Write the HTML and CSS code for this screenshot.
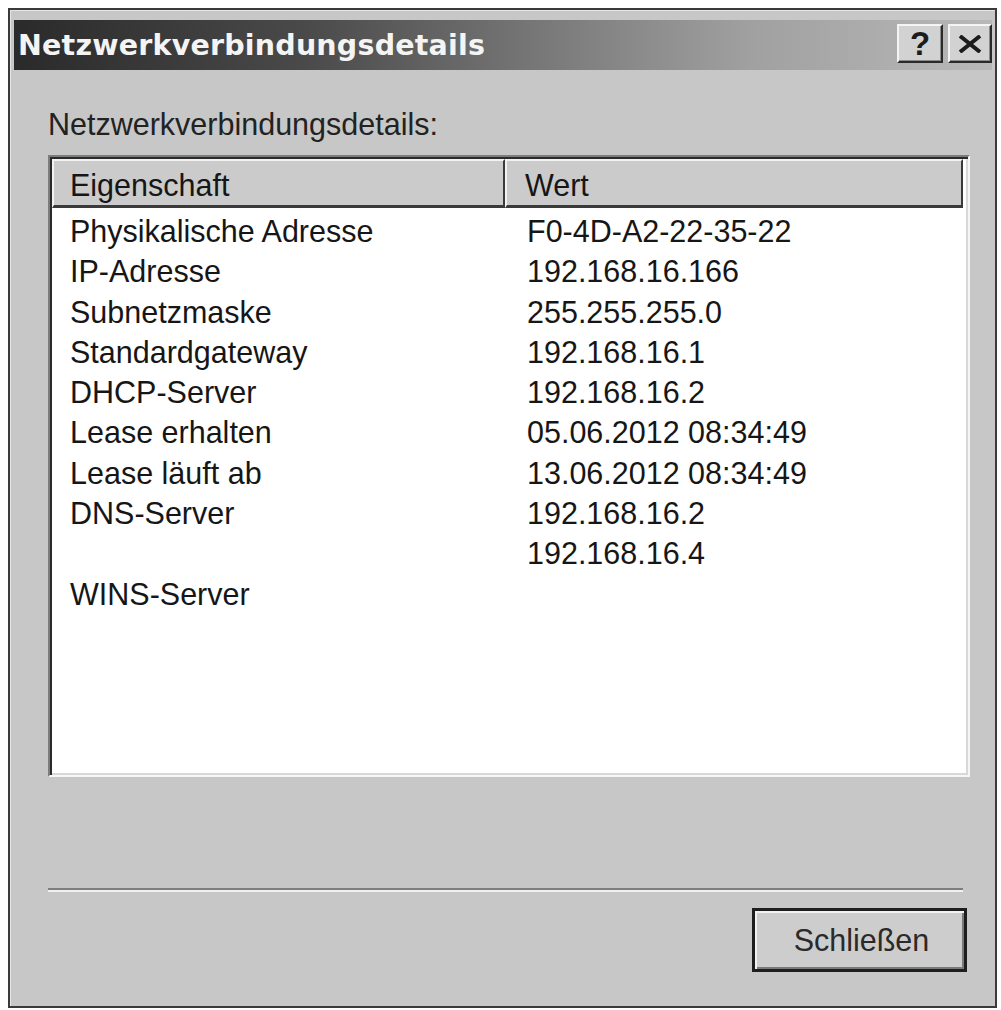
FILE: index.html
```html
<!DOCTYPE html>
<html lang="de">
<head>
<meta charset="utf-8">
<title>Netzwerkverbindungsdetails</title>
<link rel="stylesheet" href="styles.css">
</head>
<body>
<div class="window">
  <div class="titlebar">
    <span class="title">Netzwerkverbindungsdetails</span>
    <div class="tbtns">
      <div class="tbtn help">?</div>
      <div class="tbtn close">
        <svg width="24" height="18" viewBox="0 0 24 18"><path d="M2 1 L22 17 M22 1 L2 17" stroke="#1c1c1c" stroke-width="4" fill="none"/></svg>
      </div>
    </div>
  </div>
  <div class="content">
    <div class="label">Netzwerkverbindungsdetails:</div>
    <div class="listbox">
      <div class="header">
        <div class="hcell c1">Eigenschaft</div>
        <div class="hcell c2">Wert</div>
      </div>
      <div class="rows">
        <div class="row"><span class="col1">Physikalische Adresse</span><span class="col2">F0-4D-A2-22-35-22</span></div>
        <div class="row"><span class="col1">IP-Adresse</span><span class="col2">192.168.16.166</span></div>
        <div class="row"><span class="col1">Subnetzmaske</span><span class="col2">255.255.255.0</span></div>
        <div class="row"><span class="col1">Standardgateway</span><span class="col2">192.168.16.1</span></div>
        <div class="row"><span class="col1">DHCP-Server</span><span class="col2">192.168.16.2</span></div>
        <div class="row"><span class="col1">Lease erhalten</span><span class="col2">05.06.2012 08:34:49</span></div>
        <div class="row"><span class="col1">Lease läuft ab</span><span class="col2">13.06.2012 08:34:49</span></div>
        <div class="row"><span class="col1">DNS-Server</span><span class="col2">192.168.16.2</span></div>
        <div class="row"><span class="col1"></span><span class="col2">192.168.16.4</span></div>
        <div class="row"><span class="col1">WINS-Server</span><span class="col2"></span></div>
      </div>
    </div>
    <div class="sep"></div>
    <div class="btnrow"><button class="btn">Schließen</button></div>
  </div>
</div>
</body>
</html>
```
FILE: styles.css
```css
html, body {
  margin: 0;
  padding: 0;
  background: #ffffff;
}
body {
  font-family: "Liberation Sans", Arial, sans-serif;
}
.window {
  box-sizing: border-box;
  width: 989px;
  height: 1000px;
  margin: 8px 0 0 8px;
  border: 2px solid #3a3a3a;
  box-shadow: inset 1px 1px 0 #e6e6e6;
  background: #c7c7c7;
  padding: 10px 3px 0 4px;
  display: flex;
  flex-direction: column;
}
.titlebar {
  height: 50px;
  display: flex;
  align-items: center;
  background: linear-gradient(to right, #2a2a2a 0%, #4a4a4a 30%, #7a7a7a 55%, #a0a0a0 75%, #b8b8b8 100%);
  padding-left: 4px;
}
.title {
  font-family: "DejaVu Sans", Verdana, sans-serif;
  font-weight: bold;
  font-size: 28.5px;
  color: #f4f4f4;
  letter-spacing: 0.2px;
  flex: 1;
  white-space: nowrap;
}
.tbtns {
  display: flex;
  gap: 5px;
  align-self: flex-start;
  margin-top: 4px;
}
.tbtn {
  box-sizing: border-box;
  height: 39px;
  background: #d2d2d2;
  border-top: 2px solid #f4f4f4;
  border-left: 2px solid #f4f4f4;
  border-right: 2px solid #2a2a2a;
  border-bottom: 2px solid #2a2a2a;
  box-shadow: inset -1px -1px 0 #8a8a8a;
  display: flex;
  align-items: center;
  justify-content: center;
}
.help {
  width: 46px;
  font-weight: bold;
  font-size: 33px;
  color: #1c1c1c;
  line-height: 1;
}
.close {
  width: 44px;
}
.content {
  flex: 1;
  padding: 0 22px 0 34px;
  display: flex;
  flex-direction: column;
  color: #161616;
  font-size: 30.5px;
}
.label {
  margin-top: 37px;
  line-height: 34px;
  color: #222222;
  height: 36px;
}
.listbox {
  box-sizing: border-box;
  margin-top: 12px;
  height: 622px;
  background: #ffffff;
  border: 2px solid;
  border-color: #7c7c7c #f6f6f6 #f6f6f6 #7c7c7c;
  box-shadow: inset 2px 2px 0 #2a2a2a, inset -2px -2px 0 #d8d8d8;
  padding: 2px;
  display: flex;
  flex-direction: column;
}
.header {
  display: flex;
  height: 49px;
  margin-right: 3px;
}
.hcell {
  box-sizing: border-box;
  height: 49px;
  background: #cbcbcb;
  border-top: 2px solid #f2f2f2;
  border-left: 2px solid #f2f2f2;
  border-right: 2px solid #3a3a3a;
  border-bottom: 3px solid #3a3a3a;
  display: flex;
  align-items: center;
  padding-left: 16px;
  line-height: 34px;
  padding-top: 3px;
}
.hcell.c1 {
  width: 453px;
}
.hcell.c2 {
  flex: 1;
  padding-left: 18px;
}
.rows {
  padding-top: 3px;
}
.row {
  display: flex;
  height: 40.3px;
  line-height: 40.3px;
  white-space: nowrap;
}
.col1 {
  width: 453px;
  padding-left: 18px;
  box-sizing: border-box;
}
.col2 {
  padding-left: 22px;
}
.sep {
  margin-top: 111px;
  height: 2px;
  background: #7e7e7e;
  border-bottom: 2px solid #f0f0f0;
  margin-right: 7px;
}
.btnrow {
  display: flex;
  justify-content: flex-end;
  margin-top: 16px;
  margin-right: 3px;
}
.btn {
  box-sizing: border-box;
  width: 215px;
  height: 64px;
  background: #cdcdcd;
  border: 3px solid #1e1e1e;
  box-shadow: inset 2px 2px 0 #f2f2f2, inset -2px -2px 0 #7a7a7a;
  font-family: "Liberation Sans", Arial, sans-serif;
  font-size: 30.5px;
  color: #2a2a2a;
  padding: 0 0 0 4px;
}
```
